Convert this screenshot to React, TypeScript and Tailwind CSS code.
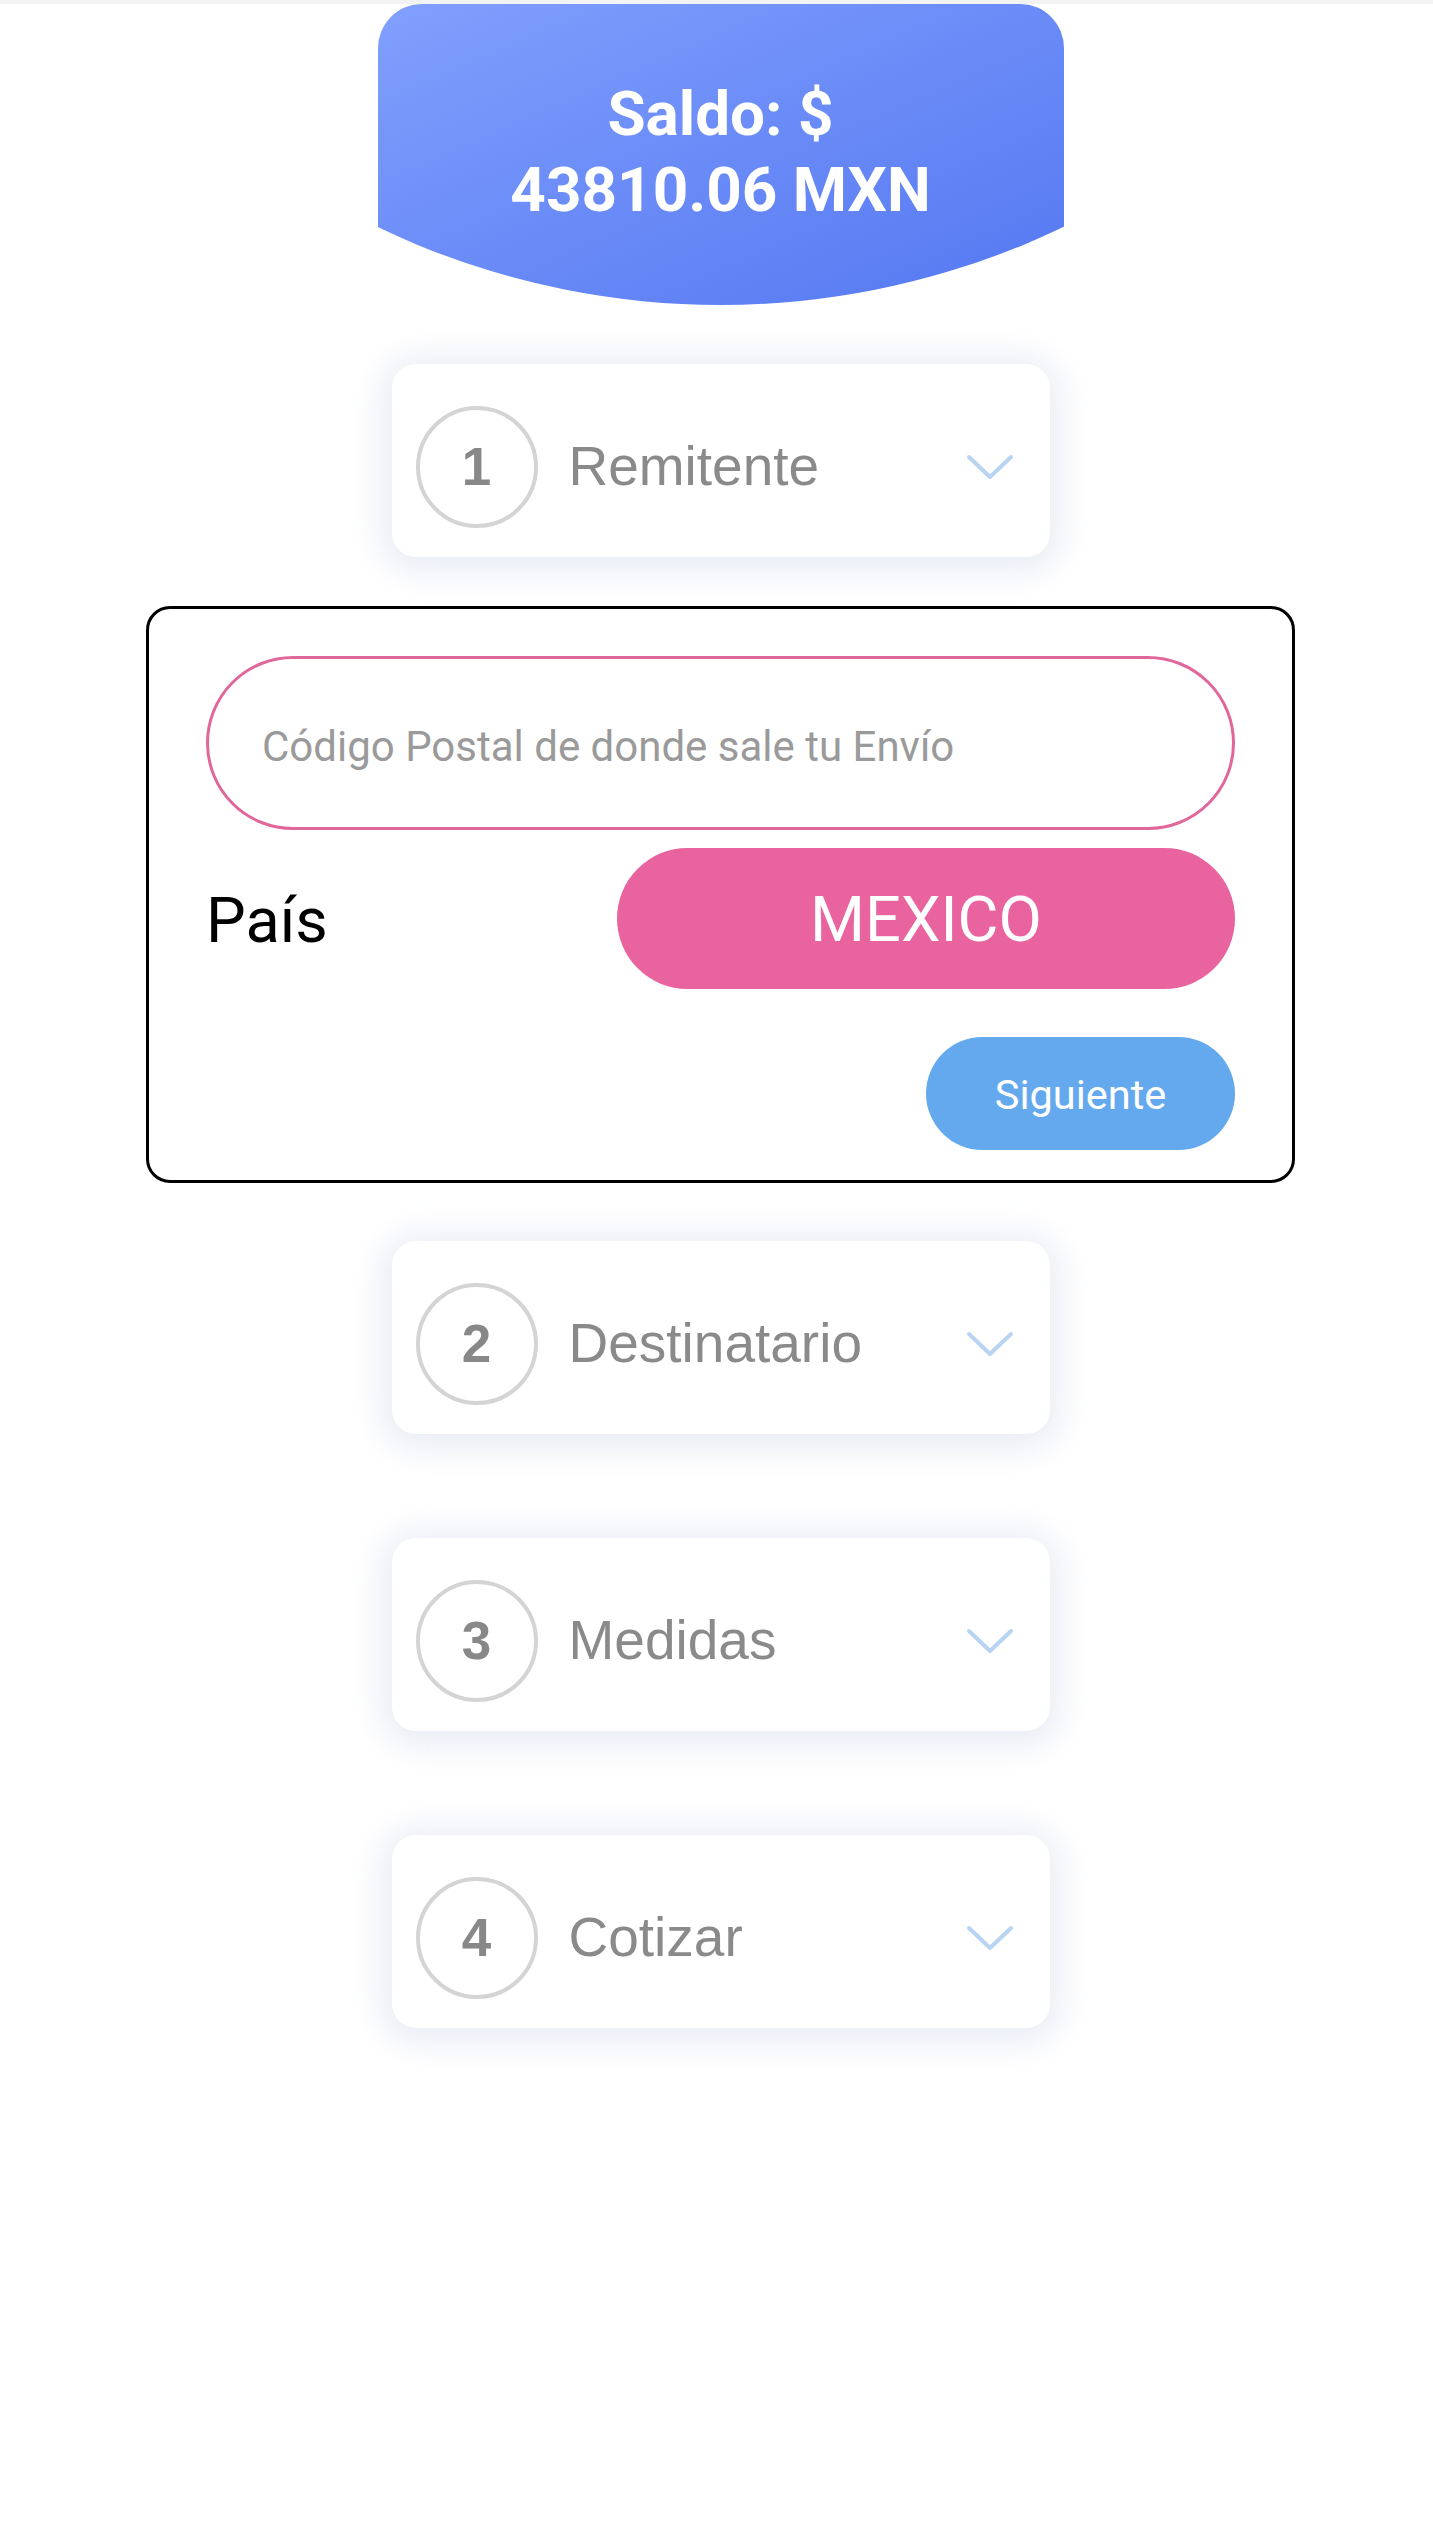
const steps = [
    { n: 1, label: "Remitente" },
    { n: 2, label: "Destinatario" },
    { n: 3, label: "Medidas" },
    { n: 4, label: "Cotizar" },
]

const Chevron = () => (
    <svg width="48" height="26" viewBox="0 0 48 26" fill="none">
        <polyline
            points="3,3 24,23 45,3"
            stroke="#b8d4f2"
            strokeWidth="4"
            strokeLinecap="round"
            strokeLinejoin="round"
        />
    </svg>
)

const StepCard = ({ n, label }: { n: number; label: string }) => {
    return (
        <div className="flex items-center w-[658px] h-[193px] pt-[12px] pl-[24px] pr-[36px] bg-white rounded-[24px] shadow-[0_4px_32px_10px_rgba(226,229,241,0.75)]">
            <div className="flex items-center justify-center w-[122px] h-[122px] rounded-full border-[4px] border-[#d4d4d4]">
                <span className="font-['Liberation_Sans',sans-serif] font-bold text-[53px] leading-none text-[#888888]">
                    {n}
                </span>
            </div>
            <span className="ml-[31px] font-['Liberation_Sans',sans-serif] text-[55px] leading-none text-[#8a8a8a]">
                {label}
            </span>
            <div className="ml-auto">
                <Chevron />
            </div>
        </div>
    )
}

const App = () => {
    return (
        <main className="min-h-[2547px] bg-white font-['Roboto',sans-serif]">
            <div className="h-[4px] bg-[#f3f3f3]" />

            <div className="flex flex-col items-center pl-[8px] pb-[200px]">
                {/* saldo */}
                <div className="flex flex-col items-center w-[686px] h-[301px] pt-[72px] rounded-t-[44px] bg-linear-to-br from-[#819ffd] to-[#5477f1] [clip-path:circle(793px_at_50%_-492px)]">
                    <p className="font-bold text-[62px] leading-[76px] text-white">Saldo: $</p>
                    <p className="font-bold text-[62px] leading-[76px] text-white">43810.06 MXN</p>
                </div>

                <div className="mt-[59px]">
                    <StepCard n={steps[0].n} label={steps[0].label} />
                </div>

                {/* remitente form */}
                <section className="flex flex-col w-[1149px] mt-[49px] px-[57px] pt-[47px] pb-[30px] border-[3px] border-black rounded-[24px]">
                    <input
                        type="text"
                        placeholder="Código Postal de donde sale tu Envío"
                        className="w-full h-[174px] pl-[53px] pt-[6px] rounded-full border-[3px] border-[#e0679a] text-[42px] text-[#555] placeholder:text-[#9a9a9a] focus:outline-none"
                    />
                    <div className="flex items-center justify-between mt-[18px]">
                        <span className="pt-[4px] text-[63px] leading-none text-black">País</span>
                        <button className="w-[618px] h-[141px] pt-[4px] rounded-full bg-[#e9639f] text-[63px] text-white">
                            MEXICO
                        </button>
                    </div>
                    <button className="self-end w-[309px] h-[113px] mt-[48px] pt-[4px] rounded-full bg-[#64a9ee] text-[41.5px] text-white">
                        Siguiente
                    </button>
                </section>

                <div className="flex flex-col gap-[104px] mt-[58px]">
                    {steps.slice(1).map((s) => (
                        <StepCard key={s.n} n={s.n} label={s.label} />
                    ))}
                </div>
            </div>
        </main>
    )
}

export default App
